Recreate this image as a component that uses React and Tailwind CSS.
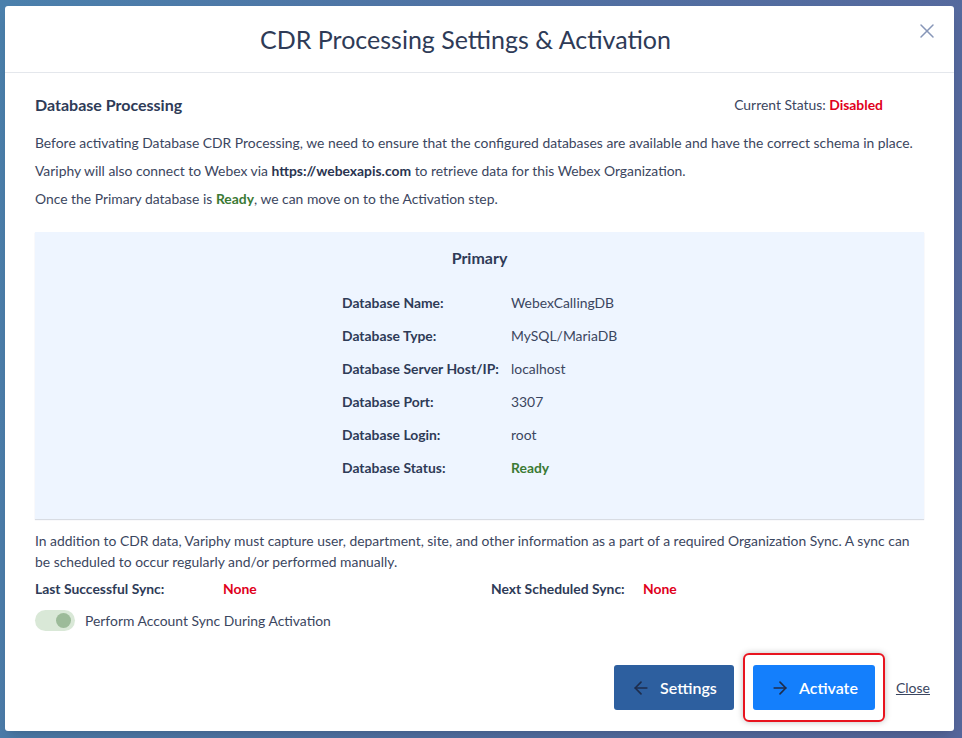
import React, { useState } from 'react';
import { X, ArrowLeft, ArrowRight } from 'lucide-react';

const dbRows = [
  { label: 'Database Name:', value: 'WebexCallingDB' },
  { label: 'Database Type:', value: 'MySQL/MariaDB' },
  { label: 'Database Server Host/IP:', value: 'localhost' },
  { label: 'Database Port:', value: '3307' },
  { label: 'Database Login:', value: 'root' },
  { label: 'Database Status:', value: 'Ready', ready: true },
];

const App = () => {
  const [syncOnActivate] = useState(true);

  return (
    <div
      className="w-[962px] h-[738px] overflow-hidden bg-[linear-gradient(100deg,#4b80ac_0%,#5170a2_50%,#56679c_100%)] pt-[6px] pl-[5px] text-[#3b4660]"
      style={{ fontFamily: 'Lato, "Noto Sans", sans-serif' }}
    >
      <div className="w-[949px] h-[725px] bg-white rounded-[3px] shadow-lg flex flex-col">
        {/* Header */}
        <div className="relative h-[67px] shrink-0 flex items-center justify-center pr-[28px] border-b border-[#e4e7ec]">
          <h2 className="text-[25px] text-[#2e3b57] leading-none">CDR Processing Settings &amp; Activation</h2>
          <button className="absolute right-[15px] top-[13px] text-[#8796b8]">
            <X size={24} strokeWidth={1.5} />
          </button>
        </div>

        {/* Body */}
        <div className="flex-1 flex flex-col px-[30px] pt-[20px]">
          <div className="flex justify-between items-center">
            <h3 className="text-[16px] font-bold leading-6 text-[#2e3b57]">Database Processing</h3>
            <p className="text-[13.9px] leading-6 pr-[41px]">
              Current Status: <span className="font-bold text-[#e0001b]">Disabled</span>
            </p>
          </div>

          <div className="mt-[16px] text-[13.88px] leading-5 space-y-2">
            <p>Before activating Database CDR Processing, we need to ensure that the configured databases are available and have the correct schema in place.</p>
            <p>
              Variphy will also connect to Webex via <span className="font-bold text-[#2a3450]">https://webexapis.com</span> to retrieve data for this Webex Organization.
            </p>
            <p>
              Once the Primary database is <span className="font-bold text-[#3b7a34]">Ready</span>, we can move on to the Activation step.
            </p>
          </div>

          {/* Primary DB box */}
          <div className="mt-[23px] h-[287px] bg-[#eef5ff] shadow-[0_1px_1px_rgba(40,60,100,0.18)] pt-[14px] flex flex-col items-center">
            <h4 className="text-[16px] font-bold leading-6 text-[#2e3b57]">Primary</h4>
            <div className="mt-[23px] flex flex-col gap-[13px] pl-[17px] w-full items-center">
              {dbRows.map((row) => (
                <div key={row.label} className="flex text-[13.9px] leading-5 w-[292px]">
                  <span className="w-[169px] font-bold text-[#2e3b57]">{row.label}</span>
                  <span className={row.ready ? 'font-bold text-[#3b7a34]' : ''}>{row.value}</span>
                </div>
              ))}
            </div>
          </div>

          <p className="mt-[11px] text-[13.88px] leading-[21px]">
            In addition to CDR data, Variphy must capture user, department, site, and other information as a part of a required Organization Sync. A sync can be scheduled to occur regularly and/or performed manually.
          </p>

          <div className="mt-[7px] flex text-[13.9px] leading-5">
            <div className="w-[456px] flex">
              <span className="w-[188px] font-bold text-[#2e3b57]">Last Successful Sync:</span>
              <span className="font-bold text-[#e0001b]">None</span>
            </div>
            <div className="flex">
              <span className="w-[152px] font-bold text-[#2e3b57]">Next Scheduled Sync:</span>
              <span className="font-bold text-[#e0001b]">None</span>
            </div>
          </div>

          <div className="mt-[11px] flex items-center gap-[10px]">
            <div className="w-[40px] h-[21px] rounded-full bg-[#d9e8d7] flex items-center justify-end pr-[4px]">
              {syncOnActivate && <div className="w-[15px] h-[15px] rounded-full bg-[#9cbb99]" />}
            </div>
            <span className="text-[13.9px] leading-5">Perform Account Sync During Activation</span>
          </div>

          {/* Footer */}
          <div className="mt-auto mb-[9px] flex justify-end items-center -mr-[6px]">
            <button className="w-[120px] h-[45px] rounded-[3px] bg-[#2d5f9f] text-white flex items-center justify-center gap-[9px] text-[16px] font-semibold">
              <ArrowLeft size={20} strokeWidth={2} className="text-[#1e2d4c]" />
              Settings
            </button>
            <div className="ml-[9px] border-2 border-[#e8141f] rounded-[6px] px-[8px] py-[10px] shadow-[0_0_6px_rgba(0,0,0,0.25)]">
              <button className="w-[122px] h-[45px] rounded-[3px] bg-[#147ffc] text-white flex items-center justify-center gap-[9px] text-[16px] font-semibold">
                <ArrowRight size={20} strokeWidth={2} className="text-[#1e2d4c]" />
                Activate
              </button>
            </div>
            <a className="ml-[11px] text-[14px] underline text-[#3b4660] cursor-pointer">Close</a>
          </div>
        </div>
      </div>
    </div>
  );
};

export default App;
